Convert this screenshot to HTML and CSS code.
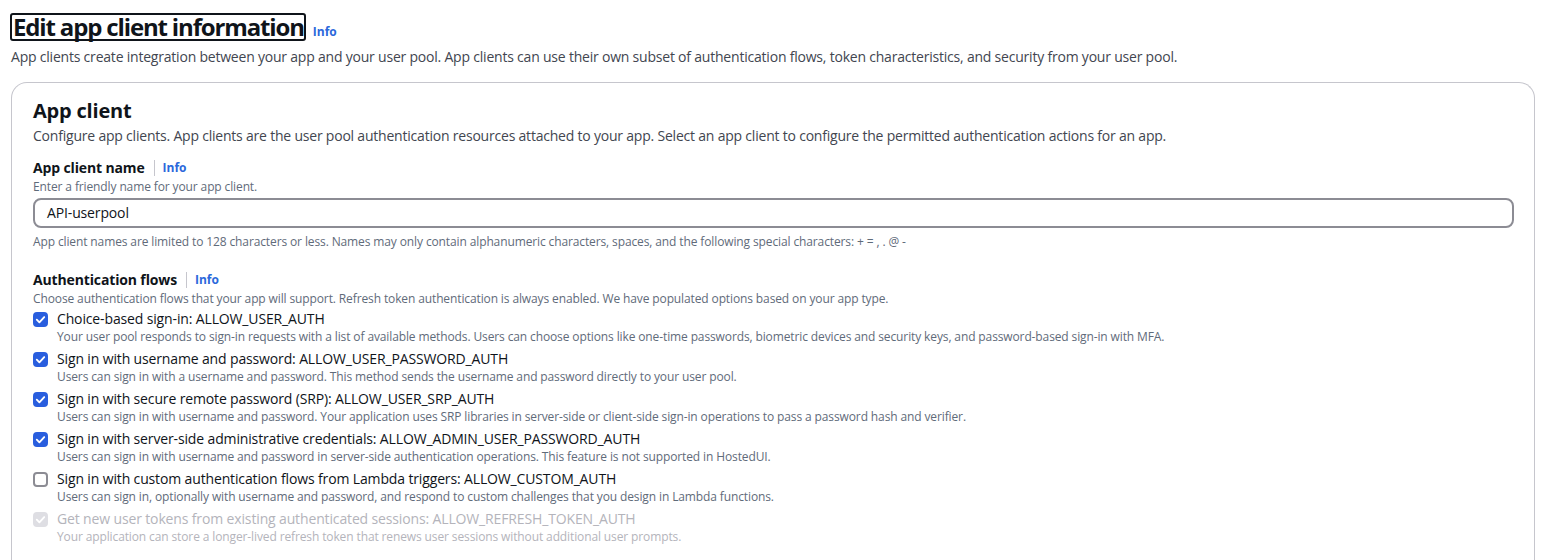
FILE: index.html
```html
<!DOCTYPE html>
<html lang="en">
<head>
<meta charset="utf-8">
<title>Edit app client information</title>
<link rel="stylesheet" href="styles.css">
</head>
<body>
<div class="page">
  <div class="page-header">
    <h1 class="page-title"><span class="title-focus">Edit app client information</span><a class="info-link title-info" href="#">Info</a></h1>
    <p class="page-desc">App clients create integration between your app and your user pool. App clients can use their own subset of authentication flows, token characteristics, and security from your user pool.</p>
  </div>
  <section class="container">
    <h2 class="container-title">App client</h2>
    <p class="container-desc">Configure app clients. App clients are the user pool authentication resources attached to your app. Select an app client to configure the permitted authentication actions for an app.</p>

    <div class="field">
      <div class="field-label"><span>App client name</span><span class="sep"></span><a class="info-link" href="#">Info</a></div>
      <div class="field-desc">Enter a friendly name for your app client.</div>
      <div class="input">API-userpool</div>
      <div class="field-hint">App client names are limited to 128 characters or less. Names may only contain alphanumeric characters, spaces, and the following special characters: + = , . @ -</div>
    </div>

    <div class="field auth">
      <div class="field-label"><span>Authentication flows</span><span class="sep"></span><a class="info-link" href="#">Info</a></div>
      <div class="field-desc">Choose authentication flows that your app will support. Refresh token authentication is always enabled. We have populated options based on your app type.</div>
      <div class="options">
        <div class="option">
          <span class="cb checked"><svg viewBox="0 0 14 14"><path d="M3 7.2 5.8 10 11 4.4"/></svg></span>
          <div class="opt-text"><div class="opt-label">Choice-based sign-in: ALLOW_USER_AUTH</div><div class="opt-desc">Your user pool responds to sign-in requests with a list of available methods. Users can choose options like one-time passwords, biometric devices and security keys, and password-based sign-in with MFA.</div></div>
        </div>
        <div class="option">
          <span class="cb checked"><svg viewBox="0 0 14 14"><path d="M3 7.2 5.8 10 11 4.4"/></svg></span>
          <div class="opt-text"><div class="opt-label">Sign in with username and password: ALLOW_USER_PASSWORD_AUTH</div><div class="opt-desc">Users can sign in with a username and password. This method sends the username and password directly to your user pool.</div></div>
        </div>
        <div class="option">
          <span class="cb checked"><svg viewBox="0 0 14 14"><path d="M3 7.2 5.8 10 11 4.4"/></svg></span>
          <div class="opt-text"><div class="opt-label">Sign in with secure remote password (SRP): ALLOW_USER_SRP_AUTH</div><div class="opt-desc">Users can sign in with username and password. Your application uses SRP libraries in server-side or client-side sign-in operations to pass a password hash and verifier.</div></div>
        </div>
        <div class="option">
          <span class="cb checked"><svg viewBox="0 0 14 14"><path d="M3 7.2 5.8 10 11 4.4"/></svg></span>
          <div class="opt-text"><div class="opt-label">Sign in with server-side administrative credentials: ALLOW_ADMIN_USER_PASSWORD_AUTH</div><div class="opt-desc">Users can sign in with username and password in server-side authentication operations. This feature is not supported in HostedUI.</div></div>
        </div>
        <div class="option">
          <span class="cb"></span>
          <div class="opt-text"><div class="opt-label">Sign in with custom authentication flows from Lambda triggers: ALLOW_CUSTOM_AUTH</div><div class="opt-desc">Users can sign in, optionally with username and password, and respond to custom challenges that you design in Lambda functions.</div></div>
        </div>
        <div class="option disabled">
          <span class="cb checked"><svg viewBox="0 0 14 14"><path d="M3 7.2 5.8 10 11 4.4"/></svg></span>
          <div class="opt-text"><div class="opt-label">Get new user tokens from existing authenticated sessions: ALLOW_REFRESH_TOKEN_AUTH</div><div class="opt-desc">Your application can store a longer-lived refresh token that renews user sessions without additional user prompts.</div></div>
        </div>
      </div>
    </div>
  </section>
</div>
</body>
</html>
```

FILE: styles.css
```css
* { box-sizing: border-box; }
html, body { margin: 0; padding: 0; background: #ffffff; }
body {
  font-family: "Open Sans", "Noto Sans", sans-serif;
  color: #0f141a;
  font-size: 14px;
  line-height: 20px;
}
.page { padding: 13px 21px 0 11px; }
.page-header { display: flex; flex-direction: column; }
.page-title {
  margin: 0;
  display: flex;
  align-items: baseline;
  font-size: 24px;
  line-height: 24px;
  font-weight: 700;
}
.title-focus {
  border: 2px solid #0f141a;
  border-radius: 3px;
  margin-left: -1px;
  padding: 0 0 0 1px;
  letter-spacing: -0.048em;
}
.title-info { margin-left: 7px; }
.info-link {
  color: #2b68db;
  font-size: 12px;
  font-weight: 700;
  text-decoration: none;
  letter-spacing: 0;
}
.page-desc {
  margin: 3px 0 0 0;
  color: #424650;
  font-size: 14px;
  line-height: 20px;
  letter-spacing: -0.015em;
}
.container {
  margin-top: 15px;
  border: 1px solid #c6c6cd;
  border-bottom: none;
  border-radius: 16px 16px 0 0;
  padding: 16px 20px 20px 21px;
}
.container-title {
  margin: 0;
  font-size: 20px;
  line-height: 24px;
  font-weight: 700;
  letter-spacing: -0.01em;
}
.container-desc {
  margin: 3px 0 0 0;
  color: #424650;
  letter-spacing: -0.015em;
}
.field { margin-top: 12px; }
.field.auth { margin-top: 20px; }
.field-label {
  display: flex;
  align-items: center;
  font-weight: 700;
  font-size: 14px;
  line-height: 20px;
  letter-spacing: -0.01em;
}
.sep {
  width: 1px;
  height: 16px;
  background: #c6c6cd;
  margin: 0 8px 0 9px;
}
.field-desc, .field-hint {
  font-size: 12px;
  line-height: 16px;
  color: #5f6b7a;
  letter-spacing: -0.01em;
}
.field-desc { margin-top: 1px; }
.input {
  margin-top: 3px;
  height: 30px;
  border: 2px solid #8c8c94;
  border-radius: 8px;
  padding: 3px 12px;
  font-size: 14px;
  line-height: 20px;
  color: #0f141a;
  letter-spacing: -0.01em;
}
.field-hint { margin-top: 6px; }
.options { margin-top: 2px; display: flex; flex-direction: column; gap: 4px; }
.option { display: flex; align-items: flex-start; gap: 9px; }
.cb {
  flex: none;
  width: 15px;
  height: 15px;
  margin-top: 3px;
  border: 2px solid #8c8c94;
  border-radius: 4px;
  display: flex;
  align-items: center;
  justify-content: center;
}
.cb.checked { background: #295ede; border-color: #295ede; }
.cb svg { width: 13px; height: 13px; flex: none; }
.cb svg path { fill: none; stroke: #ffffff; stroke-width: 2; stroke-linecap: round; stroke-linejoin: round; }
.opt-label { font-size: 14px; line-height: 20px; letter-spacing: -0.01em; }
.opt-desc { font-size: 12px; line-height: 16px; color: #5f6b7a; letter-spacing: -0.01em; }
.option.disabled .cb.checked { background: #dedee3; border-color: #dedee3; }
.option.disabled .opt-label { color: #b4b4bb; }
.option.disabled .opt-desc { color: #b4b4bb; }
```
